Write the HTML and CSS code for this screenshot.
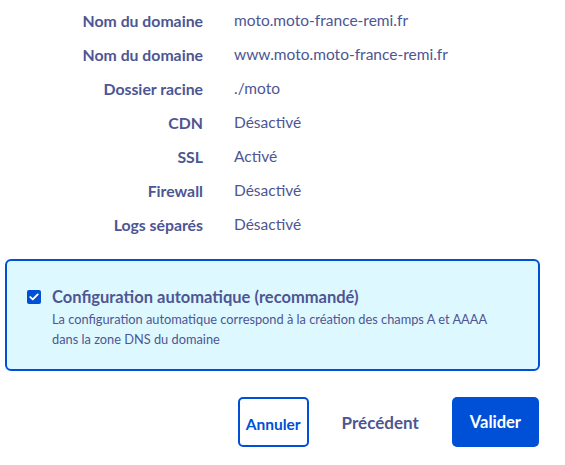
FILE: index.html
```html
<!DOCTYPE html>
<html lang="fr">
<head>
<meta charset="utf-8">
<link rel="stylesheet" href="styles.css">
</head>
<body>
<div class="page">
  <dl class="details">
    <dt>Nom du domaine</dt><dd>moto.moto-france-remi.fr</dd>
    <dt>Nom du domaine</dt><dd>www.moto.moto-france-remi.fr</dd>
    <dt>Dossier racine</dt><dd>./moto</dd>
    <dt>CDN</dt><dd>Désactivé</dd>
    <dt>SSL</dt><dd>Activé</dd>
    <dt>Firewall</dt><dd>Désactivé</dd>
    <dt>Logs séparés</dt><dd>Désactivé</dd>
  </dl>
  <div class="option">
    <span class="checkbox">
      <svg width="10" height="8" viewBox="0 0 10 8"><path d="M1.3 4.1 L3.8 6.4 L8.7 1.4" fill="none" stroke="#fff" stroke-width="1.9" stroke-linecap="round" stroke-linejoin="round"/></svg>
    </span>
    <div class="option-text">
      <div class="option-title">Configuration automatique (recommandé)</div>
      <div class="option-desc">La configuration automatique correspond à la création des champs A et AAAA dans la zone DNS du domaine</div>
    </div>
  </div>
  <div class="actions">
    <button class="btn btn-outline">Annuler</button>
    <button class="btn btn-ghost">Précédent</button>
    <button class="btn btn-primary">Valider</button>
  </div>
</div>
</body>
</html>
```
FILE: styles.css
```css
html, body {
  margin: 0;
  padding: 0;
  background: #fff;
}
body {
  font-family: "Lato", "Liberation Sans", sans-serif;
  color: #4d5693;
}
.page {
  width: 565px;
  padding-top: 3px;
}
.details {
  margin: 0;
  display: grid;
  grid-template-columns: 203px auto;
  column-gap: 31px;
  grid-auto-rows: 34px;
  align-items: center;
}
.details dt {
  text-align: right;
  font-weight: 700;
  font-size: 15.8px;
}
.details dd {
  margin: 0;
  font-size: 15.5px;
  font-weight: 400;
}
.option {
  margin: 18px 0 0 5px;
  width: 535px;
  height: 112px;
  box-sizing: border-box;
  border: 2px solid #0050d7;
  border-radius: 6px;
  background: #def8ff;
  display: flex;
  padding: 26px 20px 0 20px;
  gap: 11px;
}
.checkbox {
  flex: none;
  width: 14px;
  height: 14px;
  margin-top: 3px;
  background: #0050d7;
  border-radius: 2px;
  display: flex;
  align-items: center;
  justify-content: center;
}
.option-title {
  font-weight: 700;
  font-size: 16.5px;
  line-height: 20px;
}
.option-desc {
  font-size: 12.8px;
  line-height: 20px;
  margin-top: 2px;
  max-width: 448px;
}
.actions {
  display: flex;
  justify-content: flex-end;
  gap: 17px;
  margin-top: 26px;
  width: 539px;
}
.btn {
  font-family: inherit;
  font-weight: 700;
  font-size: 15.5px;
  height: 50px;
  border-radius: 5px;
  cursor: pointer;
}
.btn-outline {
  background: #fff;
  border: 2px solid #0050d7;
  color: #0050d7;
  padding: 4px 6px 0 6px;
}
.btn-ghost {
  background: none;
  border: none;
  color: #4d5693;
  padding: 0 16px;
  font-size: 17px;
}
.btn-primary {
  background: #0050d7;
  border: none;
  color: #fff;
  padding: 0 18px;
  font-size: 16.5px;
}
```
